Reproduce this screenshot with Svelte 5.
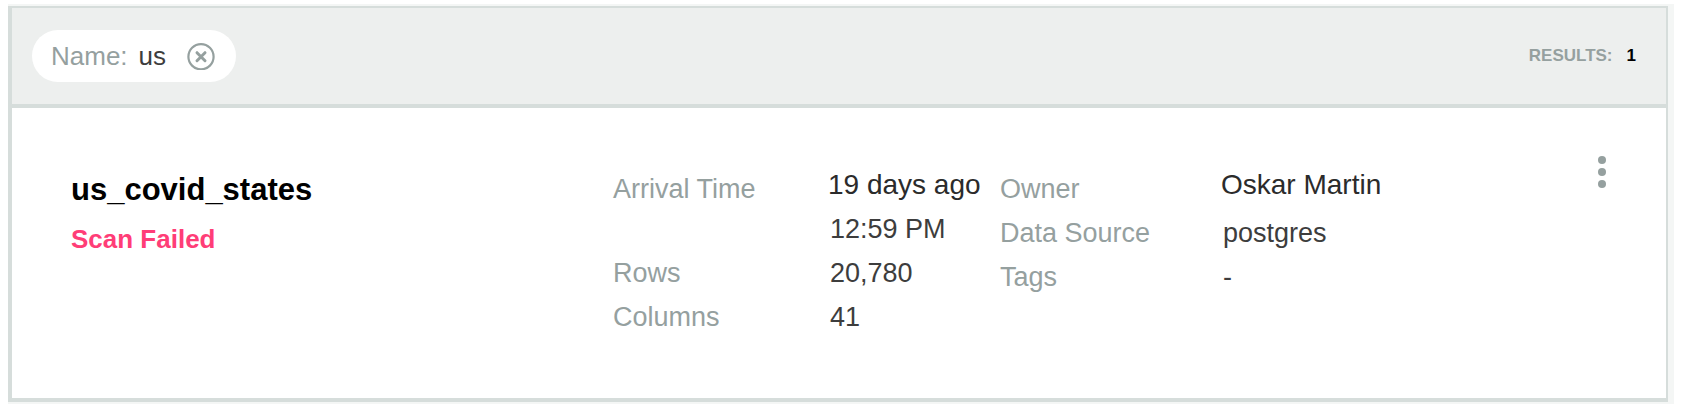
<script>
  let filter = $state('us');
  const results = [
    {
      name: 'us_covid_states',
      status: 'Scan Failed',
      arrived: '19 days ago',
      time: '12:59 PM',
      rows: 20780,
      columns: 41,
      owner: 'Oskar Martin',
      source: 'postgres',
      tags: '-'
    }
  ];
</script>

<main class="frame">
  <div class="panel">
    <header class="toolbar">
      <div class="chip" class:empty={!filter}>
        <span class="chip-label">Name:</span>
        <span class="chip-value">{filter}</span>
        <button type="button" class="clear" aria-label="Remove filter" onclick={() => (filter = '')}>
          <svg viewBox="0 0 28 28" width="28" height="28" fill="none" stroke="currentColor" aria-hidden="true">
            <circle cx="14" cy="14.7" r="12.6" stroke-width="2.2" />
            <path d="M10 10.7 18 18.7M18 10.7 10 18.7" stroke-width="3" stroke-linecap="round" />
          </svg>
        </button>
      </div>
      <p class="count">RESULTS: <strong>{results.length}</strong></p>
    </header>

    {#each results as item}
      <article class="result">
        <div class="summary">
          <h2>{item.name}</h2>
          <p class="status">{item.status}</p>
        </div>
        <dl class="facts">
          <dt class="lead">Arrival Time</dt>
          <dd><a href="#arrival">{item.arrived}</a><span>{item.time}</span></dd>
          <dt>Rows</dt>
          <dd><span>{item.rows.toLocaleString('en-US')}</span></dd>
          <dt>Columns</dt>
          <dd><span>{item.columns}</span></dd>
        </dl>
        <dl class="facts origin">
          <dt class="lead">Owner</dt>
          <dd><a href="#owner">{item.owner}</a></dd>
          <dt>Data Source</dt>
          <dd><span>{item.source}</span></dd>
          <dt>Tags</dt>
          <dd><span>{item.tags}</span></dd>
        </dl>
        <button type="button" class="more" aria-label="More actions">
          <svg viewBox="0 0 24 36" width="24" height="36" fill="currentColor" aria-hidden="true">
            <circle cx="12" cy="6" r="4" />
            <circle cx="12" cy="18" r="4" />
            <circle cx="12" cy="30" r="4" />
          </svg>
        </button>
      </article>
    {/each}
  </div>
</main>

<style>
  :global(body) {
    background: #fff;
  }
  .frame {
    margin: 4px 8px 8px;
    padding: 2px 6px 2px 0;
    background: #f4f6f5;
    font-family: "Liberation Sans", Arial, sans-serif;
    font-size: 27px;
    color: #3d3d3d;
  }
  .panel {
    border: solid #d6dddb;
    border-width: 2px 2px 4px 4px;
    background: #fff;
  }
  .toolbar {
    display: flex;
    align-items: center;
    justify-content: space-between;
    padding: 22px 30px 22px 20px;
    border-bottom: 4px solid #d6dddb;
    background: #edefee;
  }
  .chip {
    display: flex;
    align-items: center;
    padding: 0 21px 0 19px;
    border-radius: 26px;
    background: #fff;
    font-size: 26px;
    line-height: 52px;
  }
  .chip.empty {
    visibility: hidden;
  }
  .chip-label {
    margin-right: 11px;
    color: #95a09f;
  }
  .chip-value {
    margin-right: 21px;
  }
  button {
    padding: 0;
    border: 0;
    background: none;
    color: #95a09f;
    cursor: pointer;
  }
  svg {
    display: block;
  }
  .count {
    margin: 0;
    display: flex;
    gap: 14px;
    font-size: 17px;
    font-weight: 700;
    line-height: 24px;
    color: #95a09f;
  }
  .count strong {
    color: #000;
  }
  .result {
    display: grid;
    grid-template-columns: 542fr 387fr 590fr 24px;
    align-items: start;
    padding: 46px 52px 59px 59px;
  }
  .summary {
    padding-top: 10px;
  }
  h2,
  .status {
    margin: 0;
    font-weight: 700;
  }
  h2 {
    font-size: 31px;
    line-height: 52px;
    color: #000;
  }
  .status {
    font-size: 26px;
    line-height: 46px;
    color: #ff3d77;
  }
  .facts {
    display: grid;
    grid-template-columns: 215px 1fr;
    margin: 9px 0 0;
    line-height: 44px;
    white-space: nowrap;
  }
  .origin {
    grid-template-columns: 221px 1fr;
  }
  dt {
    color: #95a09f;
  }
  .lead {
    padding-top: 4px;
  }
  dd {
    margin: 0;
  }
  dd a,
  dd span {
    display: block;
  }
  dd a {
    font-size: 28px;
    color: #2b2b2b;
    text-decoration: none;
  }
  dd span {
    padding-left: 2px;
  }
</style>
